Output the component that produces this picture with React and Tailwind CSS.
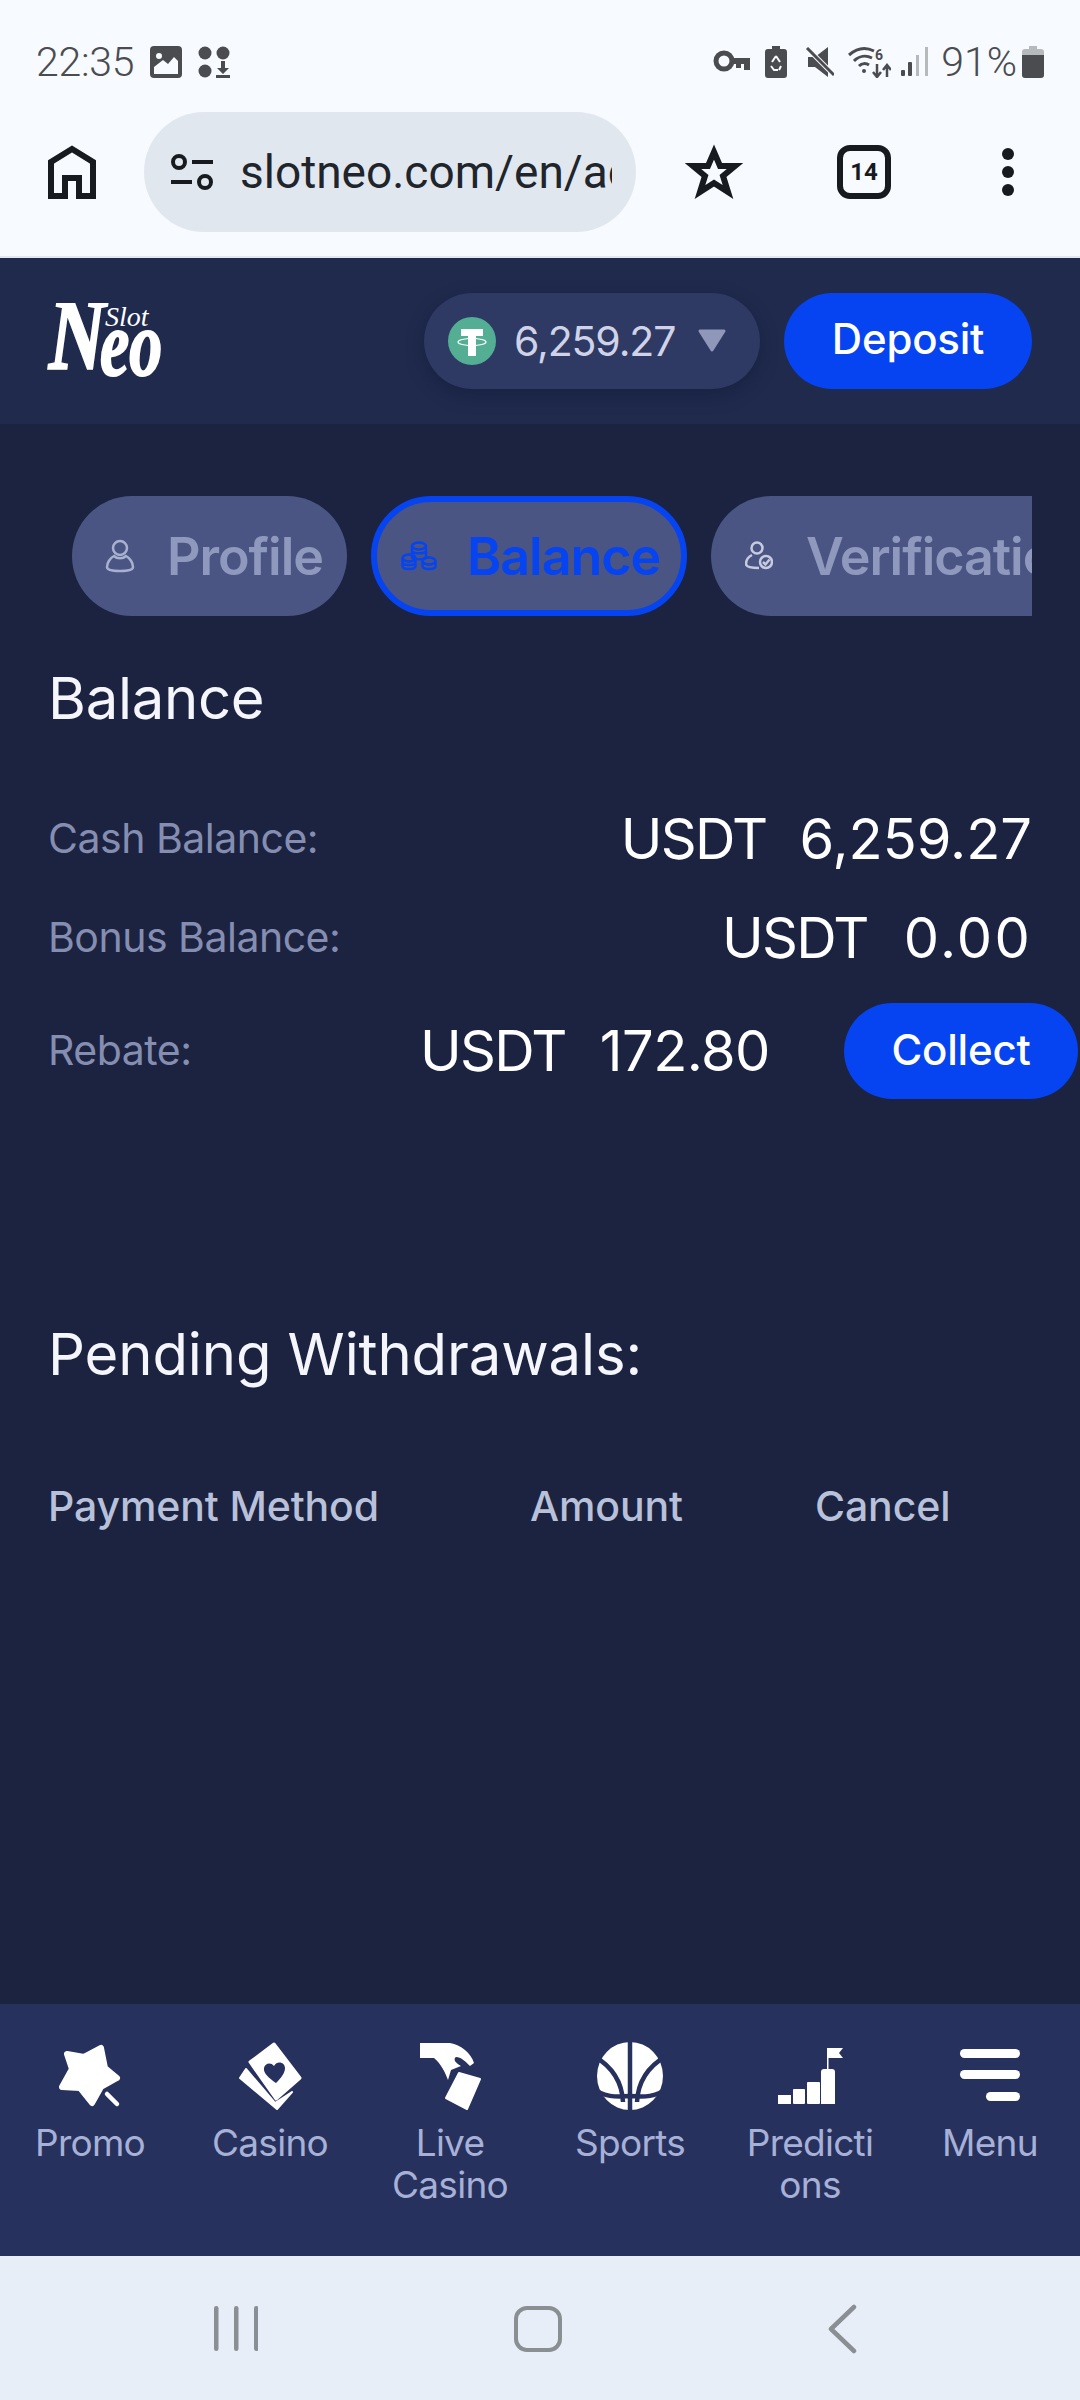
import React from 'react'

const navItems = [
  { key: 'promo', lines: ['Promo'] },
  { key: 'casino', lines: ['Casino'] },
  { key: 'live', lines: ['Live', 'Casino'] },
  { key: 'sports', lines: ['Sports'] },
  { key: 'predictions', lines: ['Predicti', 'ons'] },
  { key: 'menu', lines: ['Menu'] },
]

function NavIcon({ name }) {
  const bg = '#27315d'
  return (
    <svg width="90" height="70" viewBox="0 0 90 70" fill="#fff">
      {name === 'promo' && (
        <g>
          <path d="M22 12 L39 15 L56 6 L60 26 L72 36 L56 45 L47 61 L35 46 L17 45 L27 27 Z" stroke="#fff" strokeWidth="6" strokeLinejoin="round" />
          <path d="M62 52 L72 62" stroke="#fff" strokeWidth="4.5" strokeLinecap="round" />
        </g>
      )}
      {name === 'casino' && (
        <g>
          <path d="M21 27 L15 36 L52 67 L67 50 L50 61 Z" stroke="#fff" strokeWidth="2" strokeLinejoin="round" />
          <path d="M49 2 L75 36 L51 57 L25 20 Z" stroke="#fff" strokeWidth="3" strokeLinejoin="round" />
          <path d="M51 41 C44 36 38 31 39 26 C40 21 46 20 49 24 C52 18 60 20 60 26 C60 31 56 36 51 41 Z" fill={bg} />
        </g>
      )}
      {name === 'live' && (
        <g>
          <path d="M15 1 H45 C56 3 66 11 69 21 L65 24 C60 19 56 15 51 15 C48 17 50 21 56 24 L46 28 L43 38 C40 30 36 22 29 16 H15 Z" />
          <path d="M54 31 L75 37 L62 67 L41 56 Z" stroke="#fff" strokeWidth="2" strokeLinejoin="round" />
        </g>
      )}
      {name === 'sports' && (
        <g>
          <ellipse cx="45" cy="34" rx="33" ry="34" />
          <g fill="none" stroke={bg} strokeWidth="4.5">
            <path d="M45 0 V70" />
            <path d="M9 14 C26 24 37 38 38 60" />
            <path d="M81 14 C64 24 53 38 52 60" />
            <path d="M6 44 C18 56 32 55 45 54 C58 55 72 56 84 44" />
          </g>
        </g>
      )}
      {name === 'predictions' && (
        <g>
          <rect x="13" y="53" width="13" height="9" />
          <rect x="28" y="47" width="12" height="15" rx="1" />
          <rect x="42" y="40" width="13" height="22" rx="1" />
          <path d="M56 30 Q56 27 59 27 H67 Q70 27 70 30 V62 H56 Z" />
          <rect x="62" y="6" width="1.5" height="22" />
          <path d="M62 6 H78 L74 11 L78 16 H62 Z" />
        </g>
      )}
      {name === 'menu' && (
        <g>
          <rect x="15" y="7" width="60" height="9" rx="4.5" />
          <rect x="15" y="28" width="60" height="9" rx="4.5" />
          <rect x="41" y="50" width="34" height="9" rx="4.5" />
        </g>
      )}
    </svg>
  )
}

function StatusBar() {
  return (
    <div className="h-[112px] pt-[41px] pl-[36px] pr-[36px] flex items-start justify-between font-[Roboto,sans-serif] text-[#4a4c50]">
      <div className="flex items-center h-[42px] gap-[17px]">
        <span className="text-[41px] font-light leading-none tracking-[-0.3px]">22:35</span>
        <svg width="32" height="32" viewBox="0 0 32 32" className="-ml-[1px]">
          <rect width="32" height="32" rx="4" fill="#4a4c50" />
          <path d="M4 28 L4 21 L13 14 L18 18 L24 11 L28 15 V28 Z" fill="#f7faff" />
          <circle cx="9" cy="10" r="3" fill="#f7faff" />
        </svg>
        <svg width="32" height="32" viewBox="0 0 32 32" className="-ml-[1px]" fill="#4a4c50">
          <circle cx="7" cy="7" r="6.5" />
          <circle cx="25" cy="7" r="6.5" />
          <circle cx="7" cy="25" r="6.5" />
          <path d="M23 15 H27 V22 H31 L25 28 L19 22 H23 Z" />
          <rect x="18" y="29" width="14" height="3" />
        </svg>
      </div>
      <div className="flex items-center h-[42px]">
        <svg width="37" height="24" viewBox="0 0 37 24" fill="none">
          <circle cx="11" cy="11" r="8" stroke="#4a4c50" strokeWidth="5" />
          <path d="M18 8 H37 V20 H31 V14 H28 V18 H23 V14 H18 Z" fill="#4a4c50" />
        </svg>
        <svg width="22" height="32" viewBox="0 0 22 32" className="ml-[15px]">
          <path d="M7 0 H15 V3 H19 Q22 3 22 6 V29 Q22 32 19 32 H3 Q0 32 0 29 V6 Q0 3 3 3 H7 Z" fill="#4a4c50" />
          <path d="M11 10 L7 16 M11 10 L15 16 M6 20 L9 24 H13 M16 20 L14 24" stroke="#f7faff" strokeWidth="2" fill="none" />
        </svg>
        <svg width="30" height="30" viewBox="0 0 30 30" className="ml-[17px]">
          <path d="M0 10 H7 L20 0 V30 L7 20 H0 Z" fill="#4a4c50" transform="translate(4 0)" />
          <path d="M3 1 L30 28" stroke="#f7faff" strokeWidth="5" />
          <path d="M3 1 L30 28" stroke="#4a4c50" strokeWidth="3" />
        </svg>
        <svg width="43" height="32" viewBox="0 0 43 32" fill="none" className="ml-[14px]">
          <path d="M1 9 C9 2 18 1 26 5 M6 15 C11 10 18 9 24 12 M11 20 C14 17 18 17 21 19" stroke="#4a4c50" strokeWidth="3" />
          <circle cx="16" cy="25" r="2" fill="#4a4c50" />
          <path d="M29 18 V30 M25 26 L29 31 L33 26 M39 31 V19 M35 24 L39 19 L43 24" stroke="#4a4c50" strokeWidth="2.5" />
          <text x="27" y="14" fontSize="14" fontWeight="700" fill="#4a4c50" fontFamily="Roboto">6</text>
        </svg>
        <svg width="27" height="30" viewBox="0 0 27 30" className="ml-[10px]">
          <rect x="0" y="23" width="4" height="6" rx="1" fill="#4a4c50" />
          <rect x="7" y="15" width="4" height="14" rx="1" fill="#4a4c50" />
          <rect x="15" y="8" width="3" height="21" fill="#b7babd" />
          <rect x="24" y="0" width="3" height="29" fill="#b7babd" />
        </svg>
        <span className="ml-[13px] text-[41px] font-light leading-none">91%</span>
        <svg width="22" height="32" viewBox="0 0 22 32" className="ml-[5px]">
          <path d="M0 6 H22 V29 Q22 32 19 32 H3 Q0 32 0 29 Z" fill="#4a4c50" />
          <path d="M7 0 H15 V3 H19 Q22 3 22 6 V9 H0 V6 Q0 3 3 3 H7 Z" fill="#b7babd" />
        </svg>
      </div>
    </div>
  )
}

function Toolbar() {
  return (
    <div className="h-[120px] flex items-center text-[#171b20]">
      <svg width="48" height="54" viewBox="0 0 48 54" className="ml-[48px]" fill="none" stroke="#171b20" strokeWidth="6">
        <path d="M3 51 V17 L24 4 L45 17 V51 H31 V33 H17 V51 Z" strokeLinejoin="miter" />
      </svg>
      <div className="ml-[48px] w-[492px] h-[120px] rounded-full bg-[#e1e7ef] flex items-center">
        <svg width="44" height="38" viewBox="0 0 44 38" className="ml-[26px]" fill="none" stroke="#171b20" strokeWidth="4">
          <circle cx="9" cy="9" r="6" />
          <path d="M22 9 H43 M1 29 H22" />
          <circle cx="35" cy="29" r="6" />
        </svg>
        <div className="ml-[26px] w-[372px] overflow-hidden whitespace-nowrap text-[46px] leading-none font-[Roboto,sans-serif] text-[#20252b]">
          slotneo.com/en/account
        </div>
      </div>
      <svg width="58" height="56" viewBox="0 0 58 56" className="ml-[49px]" fill="none" stroke="#171b20" strokeWidth="6">
        <path d="M29 8 L35 22 L50 22 L38 32 L43 48 L29 39 L15 48 L20 32 L8 22 L23 22 Z" />
      </svg>
      <div className="ml-[94px] w-[54px] h-[54px] rounded-[13px] border-[6px] border-[#171b20] flex items-center justify-center text-[24px] font-bold font-[Roboto,sans-serif] leading-none">
        14
      </div>
      <div className="ml-[111px] flex flex-col gap-[6px]">
        <div className="w-[12px] h-[12px] rounded-full bg-[#171b20]" />
        <div className="w-[12px] h-[12px] rounded-full bg-[#171b20]" />
        <div className="w-[12px] h-[12px] rounded-full bg-[#171b20]" />
      </div>
    </div>
  )
}

function Logo() {
  return (
    <svg width="118" height="76" viewBox="0 0 118 76" fill="#fff" fontFamily="Liberation Serif" fontStyle="italic">
      <text transform="translate(2 66) scale(1 1.3)" fontSize="78" fontWeight="700" stroke="#fff" strokeWidth="2">N</text>
      <text transform="translate(53 72) scale(1 1.4)" fontSize="66" fontWeight="700" stroke="#fff" strokeWidth="1.5">eo</text>
      <text x="58" y="23" fontSize="28">Slot</text>
    </svg>
  )
}

function Header() {
  return (
    <div className="h-[166px] bg-[#1f2a4d] flex items-center pl-[47px] pr-[48px]">
      <Logo />
      <div className="ml-auto w-[336px] h-[96px] rounded-full bg-[#2e3a63] shadow-[0_6px_18px_rgba(15,20,45,0.35)] flex items-center pl-[24px]">
        <svg width="48" height="48" viewBox="0 0 48 48" fill="none">
          <circle cx="24" cy="24" r="24" fill="#53ae94" />
          <path d="M13 12 H35 V19 H28 V39 H20 V19 H13 Z" fill="#fff" />
          <ellipse cx="24" cy="25" rx="14" ry="3.5" stroke="#fff" strokeWidth="1.2" />
        </svg>
        <span className="ml-[18px] text-[41px] leading-none text-[#d0d3e8] tracking-[-0.027em]">6,259.27</span>
        <svg width="30" height="24" viewBox="0 0 30 24" className="ml-[22px]">
          <path d="M3 2 H27 L15 21 Z" fill="#8f98b8" stroke="#8f98b8" strokeWidth="3" strokeLinejoin="round" />
        </svg>
      </div>
      <button className="ml-[24px] w-[248px] h-[96px] pb-[5px] rounded-full bg-[#0544f0] text-white text-[42px] font-medium tracking-[-0.005em]">
        Deposit
      </button>
    </div>
  )
}

function Tabs() {
  return (
    <div className="h-[120px] ml-[72px] w-[960px] overflow-hidden flex gap-[24px] text-[52px] font-semibold tracking-[-0.02em] text-[#8f99bd]">
      <div className="shrink-0 w-[275px] rounded-full bg-[#4a5583] flex items-center pl-[33px]">
        <svg width="30" height="34" viewBox="0 0 30 34" fill="none" stroke="#a9b1d0" strokeWidth="2.5">
          <circle cx="15" cy="9" r="7" />
          <path d="M9 17 C12 20 18 20 21 17 C25 19 28 24 28 28 C28 31 24 32 15 32 C6 32 2 31 2 28 C2 24 5 19 9 17 Z" />
        </svg>
        <span className="ml-[32px] pt-[2px]">Profile</span>
      </div>
      <div className="shrink-0 w-[316px] rounded-full bg-[#4a5583] border-[6px] border-[#0544f0] flex items-center pl-[24px] text-[#0544f0]">
        <svg width="36" height="30" viewBox="0 0 36 30" fill="none" stroke="#0544f0" strokeWidth="2.5">
          <ellipse cx="18" cy="5" rx="7" ry="3.5" />
          <path d="M11 5 V16 C11 19 25 19 25 16 V5 M11 10 C11 13 25 13 25 10" />
          <ellipse cx="8" cy="17" rx="6.5" ry="3.5" />
          <path d="M1.5 17 V25 C1.5 29 14.5 29 14.5 25 V17 M1.5 21 C1.5 25 14.5 25 14.5 21" />
          <ellipse cx="28" cy="20" rx="6.5" ry="3.5" />
          <path d="M21.5 20 V25 C21.5 29 34.5 29 34.5 25 V20" />
        </svg>
        <span className="ml-[30px] pt-[2px]">Balance</span>
      </div>
      <div className="shrink-0 w-[480px] rounded-full bg-[#4a5583] flex items-center pl-[34px]">
        <svg width="28" height="30" viewBox="0 0 28 30" fill="none" stroke="#c6cbe0" strokeWidth="2.5">
          <circle cx="12" cy="7" r="5.5" />
          <path d="M7 14 C3 16 1 20 1 23 C1 26 6 27 14 27" />
          <circle cx="21" cy="21" r="6" />
          <path d="M18 21 L20.5 23.5 L24.5 18.5" />
        </svg>
        <span className="ml-[33px] pt-[2px] whitespace-nowrap">Verification</span>
      </div>
    </div>
  )
}

function Amount({ value, numClass }) {
  return (
    <span className="text-[56px] whitespace-nowrap">
      <span className="tracking-[-0.03em]">USDT</span>
      <span className={numClass}>{value}</span>
    </span>
  )
}

function Main() {
  return (
    <div className="flex-1 bg-[#1b2340] pt-[72px] text-white">
      <Tabs />
      <div className="pl-[48px] pr-[48px]">
        <h2 className="mt-[49px] h-[66px] text-[58px] leading-[66px] text-[#f5f6fb] tracking-[-0.005em]">Balance</h2>
        <div className="mt-[108px] flex items-center justify-between h-[0px]">
          <span className="text-[41px] text-[#858eb1] tracking-[-0.012em]">Cash Balance:</span>
          <Amount value="6,259.27" numClass="ml-[33px]" />
        </div>
        <div className="mt-[99px] flex items-center justify-between h-[0px]">
          <span className="text-[41px] text-[#858eb1] tracking-[-0.012em]">Bonus Balance:</span>
          <Amount value="0.00" numClass="ml-[36px] tracking-[0.04em]" />
        </div>
        <div className="mt-[65px] -mr-[46px] flex items-center h-[96px]">
          <span className="w-[372px] text-[41px] text-[#858eb1] tracking-[-0.012em]">Rebate:</span>
          <Amount value="172.80" numClass="ml-[34px] tracking-[-0.01em]" />
          <button className="ml-auto w-[234px] h-[96px] pb-[3px] rounded-full bg-[#0544f0] text-white text-[42px] font-medium tracking-[-0.005em]">
            Collect
          </button>
        </div>
        <h2 className="mt-[220px] h-[70px] text-[58px] leading-[70px] text-[#f5f6fb] tracking-[-0.002em]">Pending Withdrawals:</h2>
        <div className="mt-[91px] grid grid-cols-[482px_285px_1fr] text-[41px] font-medium leading-[52px] text-[#b9c0d9] tracking-[-0.003em]">
          <span>Payment Method</span>
          <span>Amount</span>
          <span>Cancel</span>
        </div>
      </div>
    </div>
  )
}

function BottomNav() {
  return (
    <div className="h-[252px] bg-[#27315d] grid grid-cols-6 pt-[38px]">
      {navItems.map(item => (
        <div key={item.key} className="flex flex-col items-center">
          <NavIcon name={item.key} />
          <div className="mt-[10px] text-center text-[37px] leading-[42px] text-[#a7b0d6] tracking-[-0.02em]">
            {item.lines.map(l => <div key={l}>{l}</div>)}
          </div>
        </div>
      ))}
    </div>
  )
}

function SystemNav() {
  return (
    <div className="h-[144px] bg-[#e8eef7] flex items-center">
      <svg width="44" height="48" viewBox="0 0 44 48" fill="#8a8f94" className="ml-[214px]">
        <rect x="0" y="2" width="4.5" height="45" rx="2.2" />
        <rect x="20" y="2" width="4.5" height="45" rx="2.2" />
        <rect x="40" y="2" width="4.5" height="45" rx="2.2" />
      </svg>
      <div className="ml-[256px] w-[48px] h-[46px] mt-[2px] rounded-[13px] border-[4.5px] border-[#8a8f94]" />
      <svg width="30" height="50" viewBox="0 0 30 50" fill="none" stroke="#8a8f94" strokeWidth="4.5" strokeLinecap="round" strokeLinejoin="round" className="ml-[266px] mt-[2px]">
        <path d="M26 3 L3 25 L26 47" />
      </svg>
    </div>
  )
}

export default function App() {
  return (
    <div className="w-[1080px] h-[2400px] flex flex-col overflow-hidden font-[Inter,sans-serif]">
      <div className="h-[258px] bg-[#f7faff] border-b-2 border-[#e2e8f1]">
        <StatusBar />
        <Toolbar />
      </div>
      <Header />
      <Main />
      <BottomNav />
      <SystemNav />
    </div>
  )
}
